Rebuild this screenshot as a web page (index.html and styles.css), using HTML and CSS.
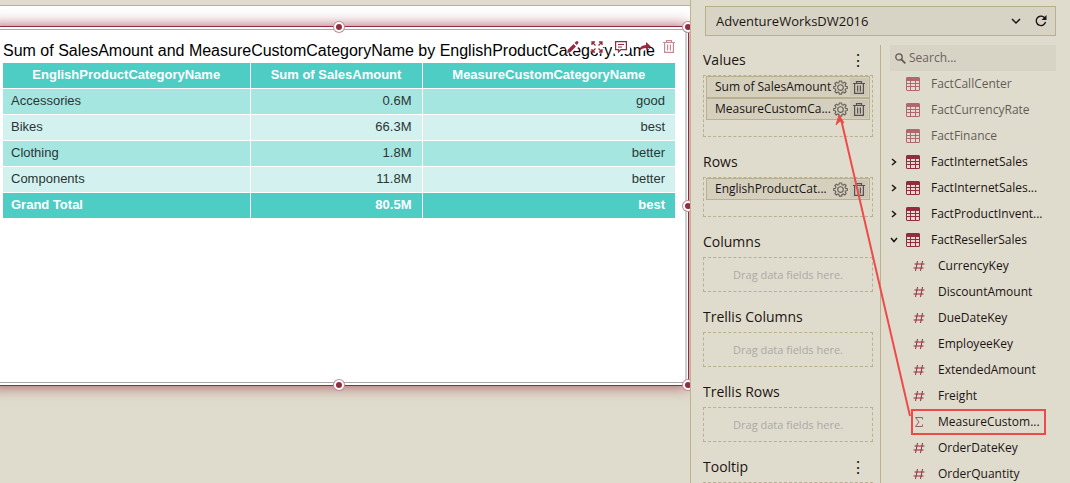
FILE: index.html
```html
<!DOCTYPE html>
<html lang="en">
<head>
<meta charset="utf-8">
<title>Dashboard Designer</title>
<link rel="stylesheet" href="styles.css">
</head>
<body>
<svg class="defs" aria-hidden="true">
  <symbol id="gear" viewBox="0 0 16 16"><path d="M6.800 1h2.400l.4 1.900 1.200.5 1.700-1.100 1.500 1.500-1.100 1.700.5 1.200 1.900.4v1.900l-1.900.5-.5 1.200 1.100 1.600-1.500 1.500-1.700-1-1.200.5-.4 1.800H6.800l-.5-1.800-1.100-.5-1.700 1L2 12.300l1.100-1.600-.5-1.200L.7 9V7.100l1.900-.4.5-1.200L2 3.800l1.500-1.500 1.700 1.100 1.100-.5z" fill="none" stroke="currentColor" stroke-width="1.200"/><circle cx="8" cy="8" r="3" fill="none" stroke="currentColor" stroke-width="1.200"/></symbol>
  <symbol id="bin" viewBox="0 0 12 13"><path d="M0 2.500h12M3.500 2V.6h5V2M1.600 3v9.400h8.800V3M4.600 4.500v6M7.400 4.500v6" fill="none" stroke="currentColor" stroke-width="1.200"/></symbol>
  <symbol id="grid" viewBox="0 0 14 14"><path fill="currentColor" fill-rule="evenodd" d="M1 0h12l1 1v12l-1 1H1l-1-1V1zM1 4v2h3V4zm4 0v2h4V4zm5 0v2h3V4zM1 7v2h3V7zm4 0v2h4V7zm5 0v2h3V7zM1 10v3h3v-3zm4 0v3h4v-3zm5 0v3h3v-3z"/></symbol>
  <symbol id="chev" viewBox="0 0 8 8"><path d="M2 1l3.500 3L2 7" fill="none" stroke="currentColor" stroke-width="1.500"/></symbol>
  <symbol id="hash" viewBox="0 0 12 12"><path d="M4.500 1L2.500 11M9.500 1l-2 10M1.500 4h10M.5 8h10" fill="none" stroke="currentColor"/></symbol>
</svg>
<div class="app">
  <main class="canvas">
    <section class="sheet">
      <div class="widget">
        <div class="tools">
          <button aria-label="Edit"><svg width="12" height="12" viewBox="0 0 12 12"><path class="halo" d="M1 10L10 2"/><path fill="currentColor" d="M0 12l1-3.500L6.500 3 9 5.500 3.500 11zM7.500 2L9 .5q1-.8 2 0 1 1 0 2L9.800 4z"/></svg></button>
          <button aria-label="Maximize"><svg width="12" height="12" viewBox="0 0 12 12"><path class="halo" d="M1 1l10 10M11 1L1 11"/><path fill="none" stroke="currentColor" stroke-width="1.300" d="M1 4V1h3M8 1h3v3M11 8v3H8M4 11H1V8M1 1l3.500 3.500M11 1L7.500 4.500M11 11L7.500 7.500M1 11l3.500-3.500"/></svg></button>
          <button aria-label="Comment"><svg width="12" height="12" viewBox="0 0 12 12"><path class="halo" d="M1 1h10v8H6L3 11V9H1z"/><path fill="#fff" stroke="currentColor" stroke-width="1.200" d="M.6.6h10.800v8H6L3.500 11V8.600H.6zM3 3.500h6M3 6h4"/></svg></button>
          <button aria-label="Share"><svg width="12" height="12" viewBox="0 0 12 12"><path class="halo" d="M2 7l4-3h4"/><path fill="currentColor" d="M7 1l5 4.500L7 9V7Q3 7 0 10q1-6 7-6z"/></svg></button>
          <button class="faded" aria-label="Delete"><svg width="12" height="13"><use href="#bin"/></svg></button>
        </div>
        <h1>Sum of SalesAmount and MeasureCustomCategoryName by EnglishProductCategoryName</h1>
        <table>
          <colgroup><col class="c1"><col class="c2"><col></colgroup>
          <thead><tr><th>EnglishProductCategoryName</th><th>Sum of SalesAmount</th><th>MeasureCustomCategoryName</th></tr></thead>
          <tbody>
            <tr><td>Accessories</td><td>0.6M</td><td>good</td></tr>
            <tr><td>Bikes</td><td>66.3M</td><td>best</td></tr>
            <tr><td>Clothing</td><td>1.8M</td><td>better</td></tr>
            <tr><td>Components</td><td>11.8M</td><td>better</td></tr>
          </tbody>
          <tfoot><tr><td>Grand Total</td><td>80.5M</td><td>best</td></tr></tfoot>
        </table>
        <i class="handle tc"></i><i class="handle tr"></i><i class="handle mr"></i><i class="handle br"></i><i class="handle bc"></i>
      </div>
    </section>
  </main>
  <aside class="panel">
    <div class="source">
      <button class="pick">AdventureWorksDW2016 <svg width="10" height="8" viewBox="0 0 10 8"><path d="M1 2l4 4 4-4" fill="none" stroke="currentColor" stroke-width="1.500"/></svg></button>
      <button aria-label="Refresh"><svg width="12" height="12" viewBox="0 0 12 12"><path d="M10.500 7A4.700 4.700 0 1 1 9 2.300L10.500 4" fill="none" stroke="currentColor" stroke-width="1.400"/><path d="M11.500 0v5h-5z" fill="currentColor"/></svg></button>
    </div>
    <div class="columns">
      <div class="bindings">
        <section><h2>Values <button aria-label="Values options">⋮</button></h2>
          <div class="drop filled">
            <div class="chip"><span>Sum of SalesAmount</span><button aria-label="Settings"><svg width="15" height="15"><use href="#gear"/></svg></button><button class="del" aria-label="Remove"><svg width="12" height="13"><use href="#bin"/></svg></button></div>
            <div class="chip"><span>MeasureCustomCa...</span><button aria-label="Settings"><svg width="15" height="15"><use href="#gear"/></svg></button><button class="del" aria-label="Remove"><svg width="12" height="13"><use href="#bin"/></svg></button></div>
          </div></section>
        <section><h2>Rows</h2>
          <div class="drop filled">
            <div class="chip"><span>EnglishProductCat...</span><button aria-label="Settings"><svg width="15" height="15"><use href="#gear"/></svg></button><button class="del" aria-label="Remove"><svg width="12" height="13"><use href="#bin"/></svg></button></div>
          </div></section>
        <section><h2>Columns</h2><div class="drop">Drag data fields here.</div></section>
        <section><h2>Trellis Columns</h2><div class="drop">Drag data fields here.</div></section>
        <section><h2>Trellis Rows</h2><div class="drop">Drag data fields here.</div></section>
        <section><h2>Tooltip <button aria-label="Tooltip options">⋮</button></h2><div class="drop"></div></section>
      </div>
      <div class="fields">
        <label class="search"><svg width="11" height="11" viewBox="0 0 11 11"><circle cx="4" cy="4" r="3.200" fill="none" stroke="currentColor" stroke-width="1.300"/><path d="M6.300 6.300L10.300 10.300" stroke="currentColor" stroke-width="1.700"/></svg><input type="text" placeholder="Search..." aria-label="Search"></label>
        <ul>
          <li class="dim"><b></b><svg width="14" height="14"><use href="#grid"/></svg><span>FactCallCenter</span></li>
          <li class="dim"><b></b><svg width="14" height="14"><use href="#grid"/></svg><span>FactCurrencyRate</span></li>
          <li class="dim"><b></b><svg width="14" height="14"><use href="#grid"/></svg><span>FactFinance</span></li>
          <li><b><svg width="8" height="8"><use href="#chev"/></svg></b><svg width="14" height="14"><use href="#grid"/></svg><span>FactInternetSales</span></li>
          <li><b><svg width="8" height="8"><use href="#chev"/></svg></b><svg width="14" height="14"><use href="#grid"/></svg><span>FactInternetSales...</span></li>
          <li><b><svg width="8" height="8"><use href="#chev"/></svg></b><svg width="14" height="14"><use href="#grid"/></svg><span>FactProductInvent...</span></li>
          <li><b class="open"><svg width="8" height="8"><use href="#chev"/></svg></b><svg width="14" height="14"><use href="#grid"/></svg><span>FactResellerSales</span></li>
          <li class="leaf"><svg width="12" height="12"><use href="#hash"/></svg><span>CurrencyKey</span></li>
          <li class="leaf"><svg width="12" height="12"><use href="#hash"/></svg><span>DiscountAmount</span></li>
          <li class="leaf"><svg width="12" height="12"><use href="#hash"/></svg><span>DueDateKey</span></li>
          <li class="leaf"><svg width="12" height="12"><use href="#hash"/></svg><span>EmployeeKey</span></li>
          <li class="leaf"><svg width="12" height="12"><use href="#hash"/></svg><span>ExtendedAmount</span></li>
          <li class="leaf"><svg width="12" height="12"><use href="#hash"/></svg><span>Freight</span></li>
          <li class="leaf marked"><svg width="12" height="12" viewBox="0 0 12 12"><path d="M9.500 3.500V1.500h-7L6 6l-3.500 4.500h7V8.500" fill="none" stroke="currentColor"/></svg><span>MeasureCustom...</span></li>
          <li class="leaf"><svg width="12" height="12"><use href="#hash"/></svg><span>OrderDateKey</span></li>
          <li class="leaf"><svg width="12" height="12"><use href="#hash"/></svg><span>OrderQuantity</span></li>
        </ul>
      </div>
    </div>
    <svg class="arrow" width="80" height="310" viewBox="0 0 80 310"><path d="M78 304L9 7" stroke="#ef4a4a" stroke-width="2"/><path d="M7 3l5 8-4-2-4 4z" fill="#ef4a4a" stroke="#ef4a4a"/></svg>
  </aside>
</div>
</body>
</html>
```
FILE: styles.css
```css
* { box-sizing: border-box; }
body { margin: 0; height: 100vh; overflow: hidden; background: #e0dccd; color: #1c1414; font: 12px/18px "Open Sans", "Noto Sans", sans-serif; }
h1, h2, ul { margin: 0; padding: 0; font-weight: 400; }
button { border: 0; padding: 0; background: none; font: inherit; color: inherit; display: flex; align-items: center; justify-content: center; }
svg { display: block; flex: none; }
.defs { position: absolute; width: 0; height: 0; }
.app { display: grid; grid-template-columns: minmax(0, 1fr) 380px; height: 100vh; }

.canvas { padding-top: 5px; overflow: hidden; }
.sheet { border-top: 1px solid #bdb293; background: linear-gradient(#fff, #fff) top / 100% 379px no-repeat; padding: 20px 1px 0 0; }
.widget { position: relative; height: 360px; margin-left: -12px; padding: 15px 13px 0 14px; border: 1px solid #942c3f; background: #fff; box-shadow: 0 0 14px #942c3fcc; }
.widget::after { content: ""; position: absolute; inset: 2px 1px 2px 0; border: 1px solid #a9a9a9; border-right: 2px solid #cfcfcf; pointer-events: none; }
.widget h1 { font: 16px/18px "Liberation Sans", Arial, sans-serif; color: #000; white-space: nowrap; padding-bottom: 3px; }
.tools { position: absolute; top: 13px; right: 13px; display: flex; gap: 12px; color: #942c3f; }
.tools svg { overflow: visible; }
.tools .faded { color: #c58b95; }
.halo { fill: none; stroke: #fff; stroke-width: 8px; stroke-linejoin: round; }
table { width: 100%; table-layout: fixed; border-collapse: collapse; font: 13px/15px "Liberation Sans", Arial, sans-serif; color: #2a3635; }
.c1 { width: 247px; }
.c2 { width: 172px; }
th, td { height: 26px; padding: 0 10px 1px; border-top: 1px solid #fff; border-right: 1px solid #fff; text-align: right; }
th { height: 25px; border-top: 0; text-align: center; }
th, tfoot td { background: #4ecdc4; color: #fff; font-weight: 700; }
td:first-child { text-align: left; padding-left: 8px; }
th:last-child, td:last-child { border-right: 0; }
tbody tr:nth-child(odd) { background: #a6e6e1; }
tbody tr:nth-child(even) { background: #d3f2ef; }
.handle { position: absolute; z-index: 1; width: 10px; height: 10px; border: 2px solid #fff; border-radius: 50%; background: #942c3f; box-shadow: 0 0 0 1px #c58b95; transform: translate(-50%, -50%); }
.tc { left: 350px; top: 0; }
.bc { left: 350px; top: 100%; }
.tr { left: 100%; top: 0; }
.mr { left: 100%; top: 50%; }
.br { left: 100%; top: 100%; }

.panel { position: relative; border-left: 1px solid #bdb38f; padding: 6px 14px 0 12px; background: #e0dccd; overflow: hidden; }
.source { display: flex; align-items: center; height: 30px; margin-left: 2px; border: 1px solid #b9b18b; background: #d8d4c5; padding: 0 8px 0 10px; gap: 14px; font-size: 13px; }
.pick { flex: 1; justify-content: space-between; }
.columns { display: grid; grid-template-columns: 178px minmax(0, 1fr); margin-top: 9px; }
.bindings { border-right: 1px solid #b9b18b; padding-right: 7px; }
.bindings section { margin-bottom: 10px; }
h2 { display: flex; justify-content: space-between; align-items: center; height: 30px; font-size: 14px; }
h2 button { width: 30px; font-size: 16px; }
.drop { display: flex; align-items: center; justify-content: center; height: 35px; border: 1px dashed #b9b18b; font-size: 11px; color: #aaa9a7; }
.filled { display: block; height: auto; padding: 0 2px 16px; font-size: 12px; color: #1c1414; }
.chip { display: flex; align-items: center; height: 22px; padding: 0 1px 0 8px; border: 1px solid #b9b18b; background: #d5d0bd; color: #1c1414; }
.chip span { flex: 1; min-width: 0; white-space: nowrap; }
li span { white-space: nowrap; }
.chip button { width: 18px; height: 18px; color: #66605a; }
.chip .del { margin-left: 1px; background: #cbc6b6; color: #5a5050; }
.fields { padding-left: 9px; }
.search { display: flex; align-items: center; gap: 3px; height: 26px; padding: 0 5px; background: #d8d4c5; color: #5f5654; }
.search input { flex: 1; min-width: 0; border: 0; padding: 0; background: none; font: inherit; color: inherit; }
.search input::placeholder { color: #6b6260; opacity: 1; }
ul { list-style: none; }
li { display: flex; align-items: center; height: 26px; padding-right: 12px; }
li b { width: 8px; margin-right: 8px; }
li svg { color: #942c3f; }
li b svg { color: #1c1414; }
li span { margin-left: 11px; }
li .open { transform: rotate(90deg); }
.leaf { padding-left: 23px; }
.leaf span { margin-left: 13px; }
.dim { opacity: .65; }
.marked { position: relative; }
.marked svg { color: #8d6467; }
.marked::after { content: ""; position: absolute; inset: 0 10px 0 21px; border: 2px solid #ef4a4a; }
.arrow { position: absolute; left: 141px; top: 112px; pointer-events: none; }
```
